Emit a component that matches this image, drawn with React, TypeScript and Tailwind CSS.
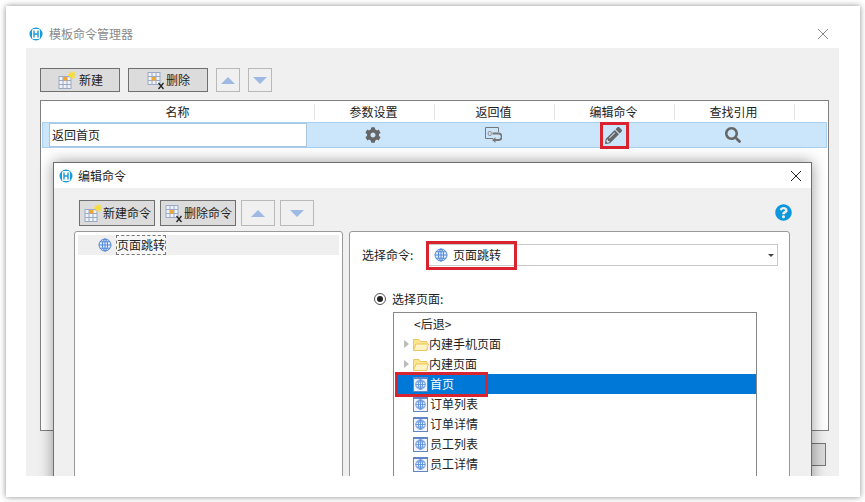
import React from 'react';
import { FaCog, FaPencilAlt, FaQuestionCircle, FaSearch } from 'react-icons/fa';

const Logo = () => (
  <svg width="14" height="14" viewBox="0 0 14 14" className="shrink-0">
    <circle cx="7" cy="7" r="6.5" fill="#1a9bd7" />
    <rect x="3" y="2" width="8" height="10" rx="1.5" fill="#fff" />
    <path d="M5 3.5v7M9 3.5v7M5 7h4" stroke="#1a9bd7" strokeWidth="1.4" fill="none" />
  </svg>
);

const Globe = ({ size = 14 }: { size?: number }) => (
  <svg width={size} height={size} viewBox="0 0 14 14" fill="none" stroke="#4f86d6" strokeWidth="1" className="shrink-0">
    <circle cx="7" cy="7" r="6" fill="#e8f0fb" />
    <ellipse cx="7" cy="7" rx="2.6" ry="6" />
    <path d="M1 7h12M2 3.8h10M2 10.2h10M7 1v12" />
  </svg>
);

const PageIcon = ({ light }: { light?: boolean }) => (
  <div
    className={`flex h-[15px] w-[15px] shrink-0 items-center justify-center border border-[#5f84c8] border-t-2 ${
      light ? 'bg-[#e8f0fb]' : 'bg-[#f2f6fc]'
    }`}
  >
    <Globe size={11} />
  </div>
);

const Folder = () => (
  <svg width="16" height="15" viewBox="0 0 16 15" className="shrink-0">
    <path d="M0.5 2.5h5.5l1.5 2h6.5v9h-13.5z" fill="#fbe58f" stroke="#ecc75c" />
    <path d="M0.5 13.5l2.5-6.5h12.5l-2 6.5z" fill="#fff3c4" stroke="#ecc75c" />
  </svg>
);

const GridIcon = ({ mark }: { mark: 'new' | 'delete' }) => (
  <svg width="20" height="20" viewBox="0 0 20 20" fill="none" className="shrink-0">
    <rect x="2" y={mark === 'new' ? 6.5 : 2.5} width="12" height="12" fill="#eef3fa" stroke="#9aa9c4" />
    <path
      d={mark === 'new' ? 'M2 10.5h12M2 14.5h12M6 6.5v12M10 6.5v12' : 'M2 6.5h12M2 10.5h12M6 2.5v12M10 2.5v12'}
      stroke="#9aa9c4"
    />
    <rect x="6" y="7" width="4" height="3.5" fill="#f0a830" />
    {mark === 'new' ? (
      <path d="M15 1v8M11 5h8M12.2 2.2l5.6 5.6M17.8 2.2l-5.6 5.6" stroke="#f7dc3c" strokeWidth="1.3" />
    ) : (
      <path d="M12.5 13l5 6M17.5 13l-5 6" stroke="#222" strokeWidth="1.3" />
    )}
  </svg>
);

const ArrowButton = ({ up, className }: { up?: boolean; className: string }) => (
  <button className={`flex items-center justify-center border border-[#b9b9b9] bg-[#f0f0f0] ${className}`}>
    <svg width="14" height="7" viewBox="0 0 14 7">
      <path d={up ? 'M7 0l7 7H0z' : 'M0 0h14L7 7z'} fill="#9db9e4" />
    </svg>
  </button>
);

const ReturnIcon = () => (
  <svg width="17" height="16" viewBox="0 0 17 16" fill="none" stroke="#777" className="block">
    <path d="M8 11.5H0.5V0.5H13.5V5" />
    <text x="2.5" y="8.5" fontSize="8" fill="#777" stroke="none" fontFamily="Liberation Sans, sans-serif">
      0
    </text>
    <path d="M7.5 6.5H13.5a2.7 2.7 0 0 1 0 6.5H9" strokeWidth="2" />
    <path d="M10.5 10.2L7 13l3.5 2.8z" fill="#777" stroke="none" />
  </svg>
);

const HEADERS = ['参数设置', '返回值', '编辑命令', '查找引用'];
const PAGES = ['订单列表', '订单详情', '员工列表', '员工详情'];

export default function App() {
  return (
    <div className="h-[502px] w-[865px] overflow-hidden bg-white p-[6px] font-['Noto_Sans_CJK_SC','Noto_Sans',sans-serif] text-xs text-[#222]">
      <div className="h-[491px] w-[854px] bg-white shadow-[0_0_6px_rgba(0,0,0,0.45)]">
        {/* title */}
        <div className="flex h-[42px] items-center justify-between pl-[23px] pr-[31px] pt-[15px] pb-[1px]">
          <div className="flex items-center gap-[6px] text-[#8a8a8a]">
            <Logo />
            <span>模板命令管理器</span>
          </div>
          <svg width="12" height="12" viewBox="0 0 12 12" stroke="#8a8a8a" fill="none">
            <path d="M1 1l10 10M11 1L1 11" />
          </svg>
        </div>

        <div className="relative ml-5 h-[428px] w-[813px] overflow-hidden bg-[#f0f0f0] pl-[14px] pr-[10px] pt-5">
          <div className="flex h-6 gap-2">
            <button className="flex w-20 items-center justify-center gap-[2px] border border-[#6f6f6f] bg-[#dcdcdc]">
              <GridIcon mark="new" />
              新建
            </button>
            <button className="flex w-20 items-center justify-center border border-[#6f6f6f] bg-[#dcdcdc]">
              <GridIcon mark="delete" />
              删除
            </button>
            <ArrowButton up className="w-6" />
            <ArrowButton className="w-6" />
          </div>

          {/* template table */}
          <div className="mt-2 h-[331px] w-[789px] border border-[#808080] bg-white">
            <div className="flex h-[21px] items-center">
              <div className="w-[274px] border-r border-[#e4e4e4] text-center">名称</div>
              {HEADERS.map((h) => (
                <div key={h} className="w-[120px] border-r border-[#e4e4e4] pr-[2px] text-center">
                  {h}
                </div>
              ))}
            </div>
            <div className="mx-[1px] flex h-[26px] items-center border border-[#a9d0ee] bg-[#cbe5fb] text-[#666]">
              <div className="ml-[6px] mr-[6px] flex h-6 w-[258px] items-center border border-[#a9c6de] bg-white pl-[2px] text-[#222]">
                返回首页
              </div>
              <div className="flex w-[120px] justify-center">
                <FaCog size={16} />
              </div>
              <div className="flex w-[120px] justify-center">
                <ReturnIcon />
              </div>
              <div className="relative flex w-[120px] justify-center">
                <FaPencilAlt size={17} />
                <div className="absolute left-[47px] top-[-5px] h-[27px] w-[29px] border-[3px] border-[#d9232e]" />
              </div>
              <div className="flex w-[120px] justify-center">
                <FaSearch size={16} />
              </div>
            </div>
          </div>
          <div className="mt-3 flex justify-end pr-[3px]">
            <button className="h-[23px] w-20 border border-[#777] bg-[#dcdcdc]" />
          </div>

          {/* edit command dialog */}
          <div className="absolute left-[27px] top-[114px] h-[400px] w-[759px] border border-[#6f6f6f] bg-[#f0f0f0] shadow-[0_0_14px_rgba(0,0,0,0.4)]">
            <div className="flex h-[25px] items-center justify-between bg-white pl-[5px] pr-[9px]">
              <div className="flex items-center gap-[5px]">
                <Logo />
                <span>编辑命令</span>
              </div>
              <svg width="12" height="12" viewBox="0 0 12 12" stroke="#222" fill="none">
                <path d="M1 1l10 10M11 1L1 11" />
              </svg>
            </div>

            <div className="flex h-[38px] items-start gap-[5px] pl-[25px] pr-[19px] pt-3">
              <button className="flex h-[26px] w-[76px] items-center justify-center border border-[#6f6f6f] bg-[#dcdcdc]">
                <GridIcon mark="new" />
                新建命令
              </button>
              <button className="flex h-[26px] w-[76px] items-center justify-center border border-[#6f6f6f] bg-[#dcdcdc]">
                <GridIcon mark="delete" />
                删除命令
              </button>
              <ArrowButton up className="h-[26px] w-[34px]" />
              <ArrowButton className="h-[26px] w-[34px]" />
              <FaQuestionCircle size={17} className="ml-auto mt-[4px] text-[#0e97dc]" />
            </div>

            <div className="mt-[5px] flex gap-[6px] pl-5">
              {/* command list */}
              <div className="h-[300px] w-[269px] rounded-t-[3px] border border-[#999] bg-white px-[3px] pt-[3px]">
                <div className="flex h-5 items-center gap-1 bg-[#efefef] pl-5">
                  <Globe />
                  <span className="flex h-5 items-center border border-dashed border-[#777] bg-[#f7f7f7]">页面跳转</span>
                </div>
              </div>

              {/* command settings */}
              <div className="h-[300px] w-[441px] rounded-t-[3px] border border-[#999] bg-white pl-3 pt-3">
                <div className="flex h-[22px] items-center">
                  <span className="w-[65px]">选择命令:</span>
                  <div className="relative flex h-[22px] w-[351px] items-center gap-[5px] border border-[#c9c9c9] bg-white pl-[6px]">
                    <Globe />
                    <span>页面跳转</span>
                    <div className="ml-auto mr-[3px] h-0 w-0 border-x-[3px] border-t-[3px] border-x-transparent border-t-[#444]" />
                    <div className="absolute left-[-2px] top-[-4px] h-[29px] w-[91px] border-[3px] border-[#d9232e]" />
                  </div>
                </div>

                <div className="ml-3 mt-[23px] flex h-5 items-center gap-[6px]">
                  <div className="flex h-3 w-3 items-center justify-center rounded-full border border-[#555]">
                    <div className="h-[6px] w-[6px] rounded-full bg-[#222]" />
                  </div>
                  <span>选择页面:</span>
                </div>

                {/* page tree */}
                <div className="ml-[31px] mt-[3px] h-[200px] w-[364px] border border-[#888] bg-white pt-[1px]">
                  <div className="flex h-5 items-center pl-5">&lt;后退&gt;</div>
                  {['内建手机页面', '内建页面'].map((name) => (
                    <div key={name} className="flex h-5 items-center pl-[10px]">
                      <div className="mr-[4px] h-0 w-0 border-y-4 border-l-[5px] border-y-transparent border-l-[#bbb]" />
                      <Folder />
                      <span>{name}</span>
                    </div>
                  ))}
                  <div className="relative ml-[2px] flex h-5 items-center gap-[2px] bg-[#0078d7] pl-[17px] text-white">
                    <PageIcon light />
                    <span>首页</span>
                    <div className="absolute left-[-1px] top-[-2px] h-[25px] w-[93px] border-[3px] border-[#d9232e]" />
                  </div>
                  {PAGES.map((name) => (
                    <div key={name} className="ml-[2px] flex h-5 items-center gap-[2px] pl-[17px]">
                      <PageIcon />
                      <span>{name}</span>
                    </div>
                  ))}
                </div>
              </div>
            </div>
          </div>
        </div>
      </div>
    </div>
  );
}
